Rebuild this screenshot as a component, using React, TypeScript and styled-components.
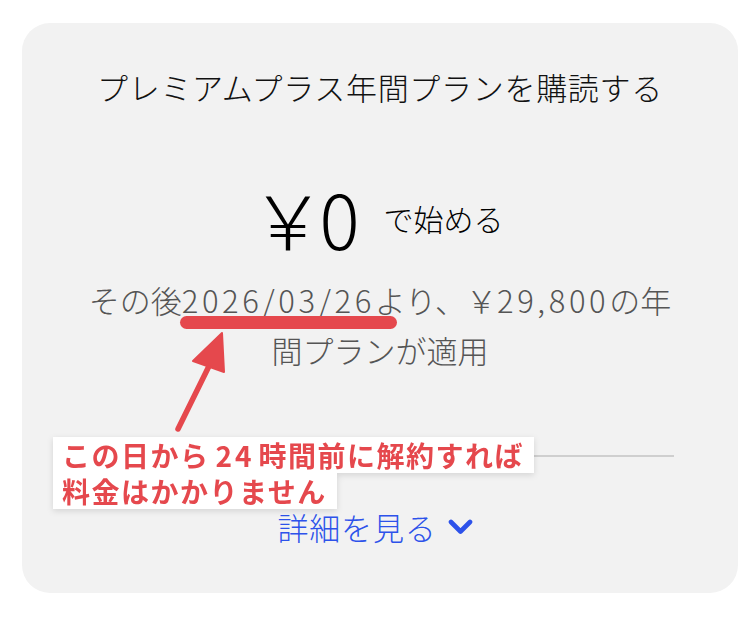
import styled, { createGlobalStyle } from "styled-components";

const GlobalStyle = createGlobalStyle`
  html, body {
    margin: 0;
    padding: 0;
    background: #ffffff;
  }
  body {
    font-family: "Noto Sans CJK JP", "Noto Sans", sans-serif;
  }
`;

const Page = styled.div`
  width: 756px;
  height: 618px;
  padding: 23px 18px 0 22px;
  box-sizing: border-box;
`;

const Card = styled.section`
  position: relative;
  height: 570px;
  border-radius: 28px;
  background: #f2f2f2;
  display: flex;
  flex-direction: column;
  align-items: center;
  padding-top: 44px;
  box-sizing: border-box;
`;

const Title = styled.h1`
  margin: 0;
  font-size: 31px;
  line-height: 40px;
  font-weight: 300;
  letter-spacing: 0.7px;
  color: #111;
`;

const PriceRow = styled.div`
  margin: 71px 6px 0 0;
  height: 80px;
  display: flex;
  align-items: center;
  justify-content: center;
  color: #000;
`;

const Price = styled.span`
  font-size: 75px;
  line-height: 80px;
  font-weight: 300;
  letter-spacing: -6px;
`;

const PriceNote = styled.span`
  margin-left: 30px;
  font-size: 30px;
  font-weight: 300;
`;

const Terms = styled.p`
  margin: 17px 0 0;
  font-size: 31px;
  line-height: 50px;
  font-weight: 300;
  color: #555;
  text-align: center;
`;

const Num = styled.span`
  letter-spacing: 3.6px;
`;

const Marked = styled(Num)`
  position: relative;

  &::after {
    content: "";
    position: absolute;
    left: -2px;
    right: -22px;
    bottom: -7px;
    height: 13px;
    border-radius: 7px;
    background: #e5484d;
  }
`;

const Divider = styled.hr`
  margin: 80px 0 0;
  width: 588px;
  height: 2px;
  border: 0;
  background: #cfcfcf;
`;

const Details = styled.button`
  margin: 50px 10px 0 0;
  display: flex;
  align-items: center;
  gap: 11px;
  padding: 0;
  border: 0;
  background: none;
  font-family: inherit;
  font-size: 31px;
  line-height: 40px;
  font-weight: 300;
  letter-spacing: 0.8px;
  color: #2d52ea;
`;

const Arrow = styled.svg`
  position: absolute;
  left: 150px;
  top: 305px;
  overflow: visible;
`;

const Callout = styled.div`
  position: absolute;
  left: 31px;
  top: 414px;
  display: flex;
  flex-direction: column;
  align-items: flex-start;
  filter: drop-shadow(0 2px 3px rgba(0, 0, 0, 0.12));
`;

const CalloutLine = styled.div`
  background: #ffffff;
  padding: 0 10px 0 9px;
  font-size: 28px;
  line-height: 36px;
  font-weight: 700;
  letter-spacing: 1.5px;
  color: #e5484d;
  white-space: nowrap;
`;

const Hours = styled.span`
  margin: 0 4px 0 6px;
  letter-spacing: 3px;
`;

export default function App() {
  return (
    <>
      <GlobalStyle />
      <Page>
        <Card>
          <Title>プレミアムプラス年間プランを購読する</Title>
          <PriceRow>
            <Price>￥0</Price>
            <PriceNote>で始める</PriceNote>
          </PriceRow>
          <Terms>
            その後<Marked>2026/03/26</Marked>より、￥<Num>29,800</Num>の年
            <br />
            間プランが適用
          </Terms>
          <Divider />
          <Details>
            詳細を見る
            <svg width="25" height="16" viewBox="0 0 25 16">
              <polyline
                points="3,3 12.5,12.5 22,3"
                fill="none"
                stroke="#2d52ea"
                strokeWidth="4.6"
                strokeLinecap="round"
                strokeLinejoin="round"
              />
            </svg>
          </Details>

          <Arrow width="60" height="110" viewBox="0 0 60 110">
            <line
              x1="6"
              y1="101"
              x2="40"
              y2="32"
              stroke="#e5484d"
              strokeWidth="5.5"
              strokeLinecap="round"
            />
            <polygon
              points="50,5 21,33 52,44"
              fill="#e5484d"
              stroke="#e5484d"
              strokeWidth="2"
              strokeLinejoin="round"
            />
          </Arrow>
          <Callout>
            <CalloutLine>
              この日から<Hours>24</Hours>時間前に解約すれば
            </CalloutLine>
            <CalloutLine>料金はかかりません</CalloutLine>
          </Callout>
        </Card>
      </Page>
    </>
  );
}
